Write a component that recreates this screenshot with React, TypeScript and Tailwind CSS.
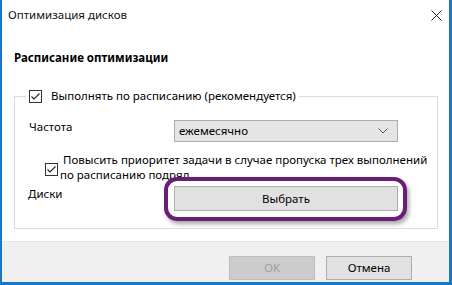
function CheckBox() {
  return (
    <svg width="13" height="13" viewBox="0 0 13 13" className="shrink-0">
      <rect x="0.5" y="0.5" width="12" height="12" fill="#fff" stroke="#333" />
      <path d="M2.5 6.5 L5 9 L10.5 3.5" fill="none" stroke="#222" strokeWidth="1.1" />
    </svg>
  )
}

export default function App() {
  return (
    <div
      className="w-[452px] h-[285px] overflow-hidden flex flex-col bg-white border-l-2 border-r-[3px] border-b-[3px] border-[#1c76c6] text-black text-[11.5px] leading-4 whitespace-nowrap"
      style={{ fontFamily: '"Noto Sans", "Open Sans", sans-serif' }}
    >
      {/* Title bar */}
      <div className="h-[30px] shrink-0 flex items-center justify-between pl-[6px] pr-[7px]">
        <span className="text-[#111]">Оптимизация дисков</span>
        <svg width="11" height="11" viewBox="0 0 11 11">
          <path d="M0.5 0.5 L10.5 10.5 M10.5 0.5 L0.5 10.5" stroke="#222" strokeWidth="1" />
        </svg>
      </div>

      {/* Body */}
      <div className="shrink-0 pl-[12px] pt-[20px] pb-[12px]">
        <div className="font-bold leading-4">Расписание оптимизации</div>

        <fieldset className="mt-[22px] w-[424px] border border-[#dcdcdc] pl-[11px] pr-[10px] pb-[17px] m-0">
          <legend className="px-[3px] flex items-center gap-[9px] h-4">
            <CheckBox />
            <span>Выполнять по расписанию (рекомендуется)</span>
          </legend>

          {/* Frequency */}
          <div className="flex items-start pt-[15px]">
            <span className="w-[148px] shrink-0 px-[3px]">Частота</span>
            <div className="mt-px w-[224px] h-[22px] bg-[#e5e5e5] border border-[#adadad] flex items-center justify-between pl-[4px] pr-[9px]">
              <span>ежемесячно</span>
              <svg width="10" height="6" viewBox="0 0 10 6">
                <path d="M0.5 0.5 L5 5 L9.5 0.5" fill="none" stroke="#555" strokeWidth="1" />
              </svg>
            </div>
          </div>

          {/* Priority */}
          <div className="flex items-center gap-[2px] mt-[10px] pl-[19px] leading-[15px]">
            <div className="pt-[4px]">
              <CheckBox />
            </div>
            <span>
              &nbsp;Повысить приоритет задачи в случае пропуска трех выполнений
              <br />
              по расписанию подряд
            </span>
          </div>

          {/* Disks */}
          <div className="flex items-start mt-[4px]">
            <span className="w-[148px] shrink-0 px-[2px]">Диски</span>
            <div className="relative">
              <button className="w-[224px] h-[25px] bg-[#e1e1e1] border border-[#adadad] flex items-center justify-center">
                Выбрать
              </button>
              <div className="absolute -left-[10px] -right-[9px] -top-[9px] -bottom-[10px] border-[4px] border-[#6a1d74] rounded-[13px] shadow-[2px_3px_4px_rgba(0,0,0,0.35)] pointer-events-none" />
            </div>
          </div>
        </fieldset>
      </div>

      {/* Footer */}
      <div className="flex-1 bg-[#f0f0f0] border-t border-[#e6e6e6] flex justify-end items-start gap-[11px] pt-[14px] pr-[37px]">
        <button className="w-[86px] h-[24px] bg-[#cccccc] border border-[#bfbfbf] text-[#a0a0a0]">OK</button>
        <button className="w-[86px] h-[24px] bg-[#e1e1e1] border border-[#adadad]">Отмена</button>
      </div>
    </div>
  )
}
